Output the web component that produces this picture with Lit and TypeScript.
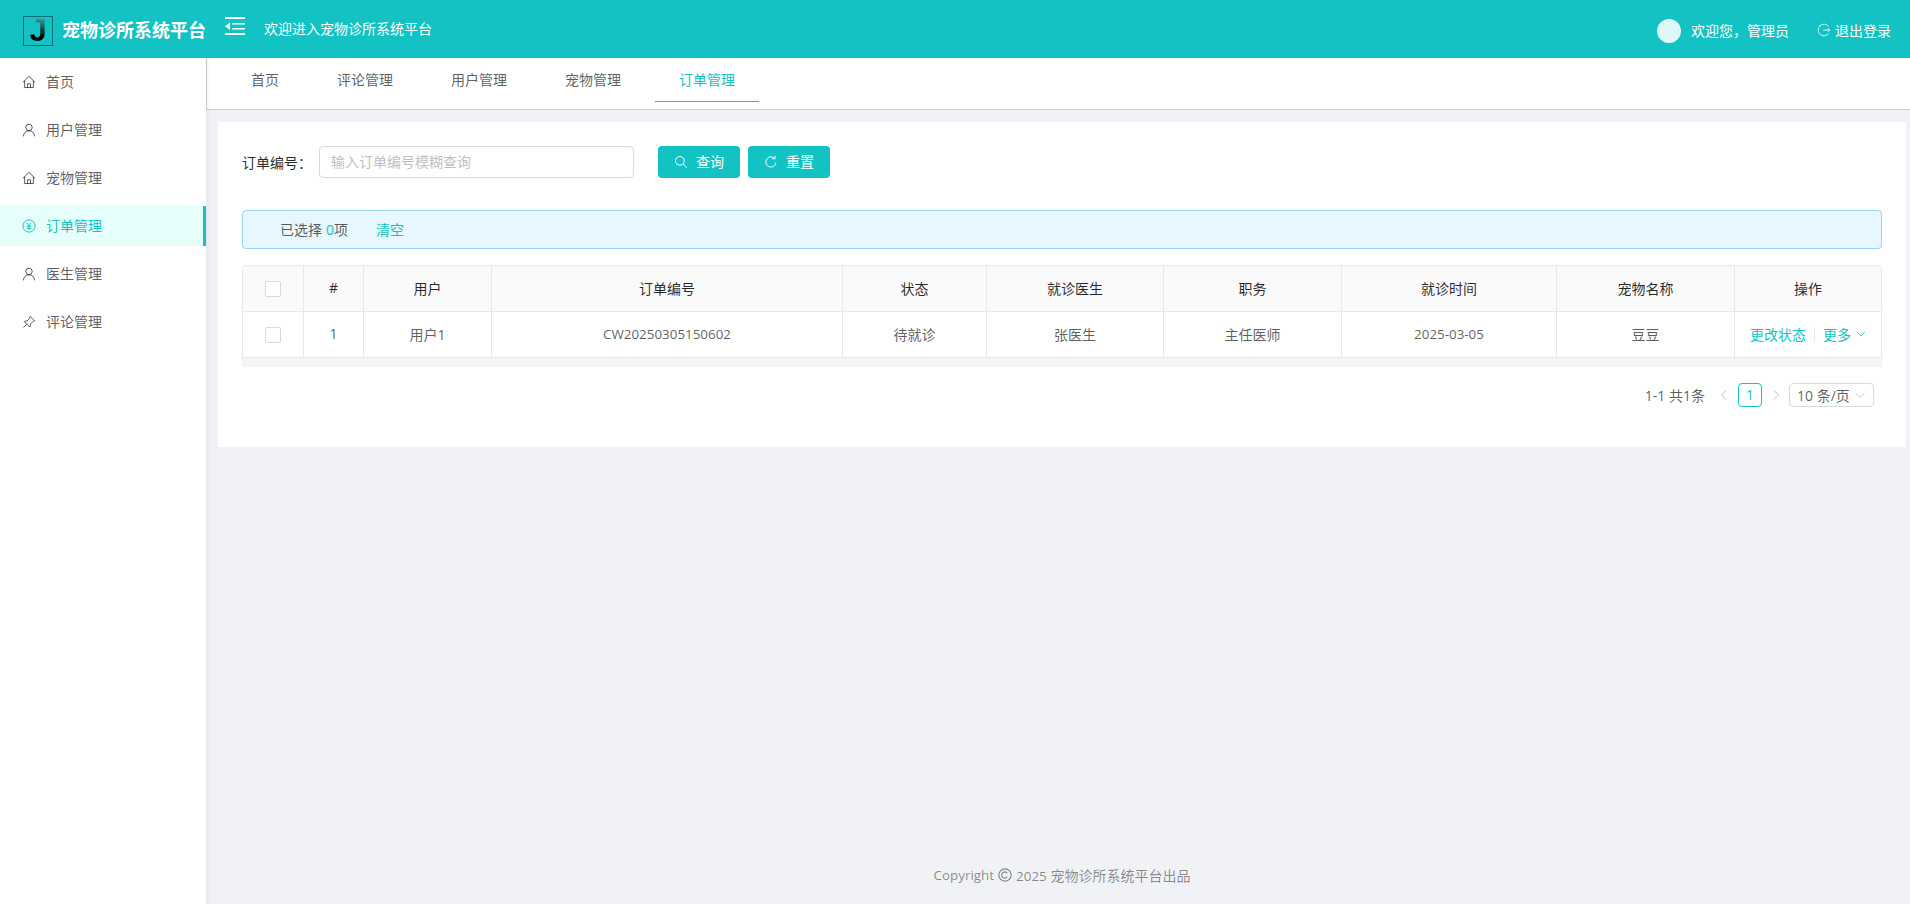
import { LitElement, html, css, svg } from 'lit'
import { customElement, state } from 'lit/decorators.js'
import { classMap } from 'lit/directives/class-map.js'

const icon = (body: unknown, size = 14, weight = 1.7) =>
  html`<svg
    class="ic"
    width=${size}
    height=${size}
    viewBox="0 0 24 24"
    fill="none"
    stroke="currentColor"
    stroke-width=${weight}
  >
    ${body}
  </svg>`

const homeIcon = svg`<path d="M1.5 12.5 12 2.5l10.5 10M4.5 10v11.5h15V10M9.5 21.5v-6.5h5v6.5"/>`
const userIcon = svg`<circle cx="12" cy="7.5" r="5.5"/><path d="M2.5 23c0-5.5 4-9.7 9.500-9.700s9.500 4.200 9.500 9.700"/>`
const pinIcon = svg`<path d="M14 2.500l7.500 7.500-2.500 1-4.500 4.500-.5 4-1 1-9-9 1-1 4-.5L13 5.500zM8 16l-5.500 5.500"/>`
const moneyIcon = svg`<circle cx="12" cy="12" r="10.500"/><path d="M8.500 6.500 12 11.500l3.500-5M8 12.500h8M8 16h8M12 11.500v7"/>`
const searchIcon = svg`<circle cx="10" cy="10" r="7.500"/><path d="M15.500 15.500l6.500 6.500"/>`
const reloadIcon = svg`<path d="M20.500 13a8.700 8.700 0 1 1-2.500-7.200"/><path d="M19 1.500v5h-5" />`
const downIcon = svg`<path d="M3 7.500l9 9.500 9-9.500"/>`
const leftIcon = svg`<path d="M16 3l-9 9 9 9"/>`
const rightIcon = svg`<path d="M8 3l9 9-9 9"/>`
const logoutIcon = svg`<path d="M20 6a10 10 0 1 0 0 12"/><path d="M11 12h11"/><path d="M18.500 9.500 22 12l-3.500 2.500" />`
const copyIcon = svg`<circle cx="12" cy="12" r="10.500"/><path d="M16 9a5.300 5.300 0 1 0 0 6"/>`

const sideItems = [
  { label: '首页', icon: homeIcon },
  { label: '用户管理', icon: userIcon },
  { label: '宠物管理', icon: homeIcon },
  { label: '订单管理', icon: moneyIcon },
  { label: '医生管理', icon: userIcon },
  { label: '评论管理', icon: pinIcon },
]
const tabs = ['首页', '评论管理', '用户管理', '宠物管理', '订单管理']
const columns = [
  { title: '#', w: 60, key: 'no' },
  { title: '用户', w: 128, key: 'user' },
  { title: '订单编号', w: 351, key: 'code', num: true },
  { title: '状态', w: 144, key: 'status' },
  { title: '就诊医生', w: 177, key: 'doctor' },
  { title: '职务', w: 178, key: 'job' },
  { title: '就诊时间', w: 215, key: 'date', num: true },
  { title: '宠物名称', w: 178, key: 'pet' },
]
const rows: Record<string, string>[] = [
  {
    no: '1',
    user: '用户1',
    code: 'CW20250305150602',
    status: '待就诊',
    doctor: '张医生',
    job: '主任医师',
    date: '2025-03-05',
    pet: '豆豆',
  },
]

@customElement('app-root')
class App extends LitElement {
  static styles = css`
    :host {
      display: block;
      height: 904px;
      overflow: hidden;
      font-family: 'Open Sans', 'Noto Sans CJK SC', sans-serif;
      font-size: 14px;
      color: rgba(0, 0, 0, 0.65);
      background: #f0f2f5;
    }
    .ic {
      display: block;
      flex: none;
    }
    .num {
      font-size: 13.4px;
    }
    .header {
      height: 58px;
      background: #13c2c2;
      color: #fff;
      display: flex;
      align-items: center;
      padding: 0 19px 0 23px;
      position: relative;
      z-index: 2;
    }
    .logo {
      width: 30px;
      height: 30px;
      margin-top: 4px;
      box-sizing: border-box;
      border: 1px solid #0b6f72;
      font: bold 31px/28px 'Liberation Sans', sans-serif;
      text-align: center;
      overflow: hidden;
      background: linear-gradient(180deg, #4f9c9c 0%, #1a5c5c 35%, #000 70%);
      -webkit-background-clip: text;
      background-clip: text;
      color: transparent;
    }
    .brand {
      margin-left: 9px;
      font-size: 18px;
      font-weight: 700;
      width: 163px;
      white-space: nowrap;
    }
    .fold {
      display: block;
      margin: -6px 0 0 0;
    }
    .welcome {
      margin-left: 19px;
      margin-top: -3px;
    }
    .spacer {
      flex: 1;
    }
    .avatar {
      width: 24px;
      height: 24px;
      margin-top: 3px;
      border-radius: 50%;
      background: #e0f7f7;
    }
    .hello {
      margin-left: 10px;
      margin-top: 1px;
    }
    .logout {
      margin-left: 28px;
      display: flex;
      align-items: center;
      gap: 4px;
      margin-top: 1px;
    }
    .logout .ic {
      opacity: 0.85;
    }
    .main {
      display: flex;
      height: 846px;
    }
    .side {
      width: 206px;
      flex: none;
      background: #fff;
      box-shadow: 2px 0 6px rgba(0, 21, 41, 0.06);
      padding-top: 4px;
      position: relative;
      z-index: 1;
    }
    .side-item {
      height: 40px;
      margin-bottom: 8px;
      display: flex;
      align-items: center;
      padding-left: 22px;
      gap: 10px;
      color: rgba(0, 0, 0, 0.65);
      box-sizing: border-box;
    }
    .side-item span {
      padding-bottom: 2px;
    }
    .side-item.active {
      background: #e6fffb;
      color: #13c2c2;
      border-right: 3px solid #13c2c2;
    }
    .body {
      flex: 1;
      min-width: 0;
      display: flex;
      flex-direction: column;
    }
    .tabs {
      height: 52px;
      box-sizing: border-box;
      background: #fff;
      display: flex;
      gap: 10px;
      padding-left: 20px;
      border-left: 1px solid #d0d0d4;
      border-bottom: 1px solid #cfcfd4;
    }
    .tab {
      padding: 0 24px;
      height: 44px;
      line-height: 44px;
      box-sizing: border-box;
    }
    .tab.active {
      color: #13c2c2;
      border-bottom: 1px solid #13c2c2;
    }
    .content {
      flex: 1;
      display: flex;
      flex-direction: column;
      padding: 12px 4px 0 12px;
      min-height: 0;
    }
    .card {
      background: #fff;
      height: 325px;
      box-sizing: border-box;
      padding: 24px;
    }
    .query {
      display: flex;
      align-items: center;
      height: 32px;
    }
    .query-label {
      width: 77px;
      color: rgba(0, 0, 0, 0.85);
      white-space: nowrap;
    }
    .input {
      width: 315px;
      height: 32px;
      box-sizing: border-box;
      border: 1px solid #d9d9d9;
      border-radius: 4px;
      padding: 0 11px;
      line-height: 30px;
      color: #bfbfbf;
    }
    .btn {
      height: 32px;
      box-sizing: border-box;
      background: #13c2c2;
      color: #fff;
      border-radius: 4px;
      display: flex;
      align-items: center;
      justify-content: center;
      gap: 8px;
      width: 82px;
    }
    .btn span {
      padding-bottom: 2px;
    }
    .btn.first {
      margin-left: 24px;
      margin-right: 8px;
    }
    .alert {
      margin-top: 32px;
      height: 39px;
      box-sizing: border-box;
      background: #e6f7ff;
      border: 1px solid #91d5ff;
      border-radius: 4px;
      display: flex;
      align-items: center;
      padding-left: 37px;
      padding-bottom: 1px;
    }
    .alert b {
      font-weight: 400;
      color: #13c2c2;
      margin-left: 4px;
    }
    .alert a {
      color: #13c2c2;
      margin-left: 28px;
    }
    .table-wrap {
      margin-top: 16px;
      border: 1px solid #e8e8e8;
      border-bottom: 0;
      border-radius: 4px 4px 0 0;
      overflow: hidden;
    }
    table {
      border-collapse: separate;
      border-spacing: 0;
      table-layout: fixed;
      width: 100%;
    }
    th,
    td {
      height: 46px;
      padding: 0 0 2px;
      box-sizing: border-box;
      text-align: center;
      font-weight: 400;
      border-right: 1px solid #e8e8e8;
      border-bottom: 1px solid #e8e8e8;
      white-space: nowrap;
    }
    th:last-child,
    td:last-child {
      border-right: 0;
    }
    th {
      background: #fafafa;
      color: rgba(0, 0, 0, 0.85);
    }
    .check {
      display: inline-block;
      vertical-align: middle;
      width: 16px;
      height: 16px;
      box-sizing: border-box;
      background: #fff;
      border: 1px solid #d9d9d9;
      border-radius: 2px;
    }
    .scroll {
      height: 9px;
      background: #f5f5f5;
    }
    .ops {
      display: flex;
      align-items: center;
      justify-content: center;
      color: #13c2c2;
    }
    .ops i {
      width: 1px;
      height: 14px;
      background: #e8e8e8;
      margin: 0 8px;
    }
    .ops .ic {
      margin-left: 5px;
    }
    .pager {
      margin-top: 16px;
      display: flex;
      align-items: center;
      justify-content: flex-end;
      padding-right: 8px;
      height: 24px;
    }
    .total {
      margin-right: 13px;
    }
    .arrow {
      color: #bfbfbf;
    }
    .page {
      margin: 0 8px;
      width: 24px;
      height: 24px;
      box-sizing: border-box;
      border: 1px solid #13c2c2;
      border-radius: 4px;
      color: #13c2c2;
      text-align: center;
      line-height: 21px;
    }
    .size {
      margin-left: 7px;
      width: 85px;
      height: 24px;
      box-sizing: border-box;
      border: 1px solid #d9d9d9;
      border-radius: 4px;
      display: flex;
      align-items: center;
      justify-content: space-between;
      padding: 0 7px;
    }
    .size .ic {
      color: #bfbfbf;
    }
    .footer {
      margin-top: auto;
      height: 58px;
      color: rgba(0, 0, 0, 0.45);
      display: flex;
      align-items: center;
      justify-content: center;
      gap: 4px;
    }
  `

  @state()
  activeMenu = '订单管理'

  render() {
    return html`
      <div class="header">
        <div class="logo">J</div>
        <div class="brand">宠物诊所系统平台</div>
        <svg class="fold" width="20" height="18" viewBox="0 0 20 18" fill="#fff">
          <rect y="0" width="20" height="2" />
          <rect x="7" y="6" width="13" height="1.500" />
          <rect x="7" y="11" width="13" height="1.500" />
          <rect y="16" width="20" height="2" />
          <path d="M0 9.200l5-3.700v7.400z" />
        </svg>
        <div class="welcome">欢迎进入宠物诊所系统平台</div>
        <div class="spacer"></div>
        <div class="avatar"></div>
        <div class="hello">欢迎您，管理员</div>
        <div class="logout">${icon(logoutIcon)}<span>退出登录</span></div>
      </div>
      <div class="main">
        <div class="side">
          ${sideItems.map(
            (m) => html`
              <div class="side-item ${classMap({ active: m.label === this.activeMenu })}">
                ${icon(m.icon)}<span>${m.label}</span>
              </div>
            `
          )}
        </div>
        <div class="body">
          <div class="tabs">
            ${tabs.map(
              (t) => html`<div class="tab ${classMap({ active: t === this.activeMenu })}">${t}</div>`
            )}
          </div>
          <div class="content">
            <div class="card">
              <div class="query">
                <div class="query-label">订单编号：</div>
                <div class="input">输入订单编号模糊查询</div>
                <div class="btn first">${icon(searchIcon)}<span>查询</span></div>
                <div class="btn">${icon(reloadIcon)}<span>重置</span></div>
              </div>
              <div class="alert">已选择<b>0</b>项<a>清空</a></div>
              <div class="table-wrap">
                <table>
                  <colgroup>
                    <col style="width:61px" />
                    ${columns.map((c) => html`<col style="width:${c.w}px" />`)}
                    <col />
                  </colgroup>
                  <thead>
                    <tr>
                      <th><span class="check"></span></th>
                      ${columns.map((c) => html`<th>${c.title}</th>`)}
                      <th>操作</th>
                    </tr>
                  </thead>
                  <tbody>
                    ${rows.map(
                      (r) => html`
                        <tr>
                          <td><span class="check"></span></td>
                          ${columns.map(
                            (c) => html`<td class=${c.num ? 'num' : ''}>${r[c.key]}</td>`
                          )}
                          <td>
                            <div class="ops">
                              <span>更改状态</span><i></i><span>更多</span>${icon(downIcon, 10, 2)}
                            </div>
                          </td>
                        </tr>
                      `
                    )}
                  </tbody>
                </table>
              </div>
              <div class="scroll"></div>
              <div class="pager">
                <span class="total">1-1 共1条</span>
                <span class="arrow">${icon(leftIcon, 12, 2)}</span>
                <span class="page">1</span>
                <span class="arrow">${icon(rightIcon, 12, 2)}</span>
                <div class="size"><span>10 条/页</span>${icon(downIcon, 12, 1.6)}</div>
              </div>
            </div>
            <div class="footer">
              <span class="num">Copyright</span>${icon(copyIcon, 14, 2)}<span
                ><span class="num">2025</span> 宠物诊所系统平台出品</span
              >
            </div>
          </div>
        </div>
      </div>
    `
  }
}
export default App
